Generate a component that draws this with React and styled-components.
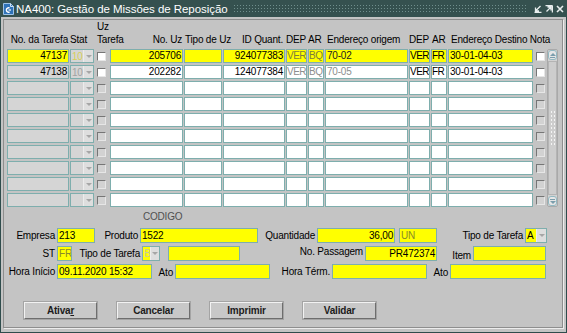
import React from 'react';
import styled, { createGlobalStyle } from 'styled-components';

const YELLOW = '#ffff00';
const COLS = '62px 24px 14px 73px 38px 62px 21px 16px 83px 21px 16px 85px 12px 11px';

const GlobalStyle = createGlobalStyle`
  html, body { margin: 0; padding: 0; background: #c4c4c4; }
  body {
    font-family: "Liberation Sans", Arial, sans-serif;
    font-size: 9.5px;
    letter-spacing: -0.2px;
    color: #000;
  }
`;

const Window = styled.div`
  width: 567px;
  height: 333px;
  display: flex;
  flex-direction: column;
`;

const TitleBar = styled.div`
  height: 17px;
  flex: none;
  display: flex;
  align-items: center;
  padding: 0 3px 0 3px;
  background: #35514f;
  color: #fff;
`;

const TitleText = styled.span`
  margin-left: 2px;
  font-size: 11.5px;
  letter-spacing: -0.05px;
  white-space: nowrap;
`;

const Dots = styled.div`
  flex: 1;
  height: 10px;
  margin: 0 8px 0 5px;
  background-image: radial-gradient(circle, #6f8e8c 0.8px, transparent 1px);
  background-size: 3px 3px;
`;

const TitleButtons = styled.div`
  display: flex;
  gap: 3px;
  align-items: center;
`;

const Frame = styled.div`
  flex: 1;
  display: flex;
  background: #c4c4c4;
  border: 1px solid #2f4c4c;
  border-top: none;
  padding: 2px 3px 4px 2px;
`;

const Panel = styled.div`
  flex: 1;
  display: flex;
  flex-direction: column;
  border: 1px solid #8e8e8e;
  box-shadow: 1px 1px 0 #ececec;
  padding: 0 4px 0 3px;
`;

const HeadGrid = styled.div`
  display: grid;
  grid-template-columns: ${COLS};
  column-gap: 1px;
  height: 28px;
  margin-bottom: 1px;
`;

const HeadCell = styled.div`
  display: flex;
  align-items: flex-end;
  justify-content: ${p => p.$align || 'flex-start'};
  padding: 0 ${p => p.$pr || 0}px 2px ${p => p.$pl || 0}px;
  line-height: 13px;
  font-size: 10px;
  white-space: nowrap;
`;

const BodyGrid = styled.div`
  display: grid;
  grid-template-columns: ${COLS};
  grid-auto-rows: 14px;
  column-gap: 1px;
  row-gap: 2px;
`;

const Field = styled.div`
  box-sizing: border-box;
  width: ${p => (p.$w ? `${p.$w}px` : 'auto')};
  flex: none;
  border: 1px solid #7eaead;
  background: ${p => p.$bg || '#fff'};
  color: ${p => p.$color || '#000'};
  text-align: ${p => p.$align || 'left'};
  padding: 0 ${p => (p.$tight ? 0 : 1)}px;
  font-size: 10px;
  letter-spacing: ${p => (p.$tight ? '-0.5px' : '-0.2px')};
  line-height: 12px;
  overflow: hidden;
  white-space: nowrap;
`;

const Combo = styled.div`
  box-sizing: border-box;
  width: ${p => (p.$w ? `${p.$w}px` : 'auto')};
  flex: none;
  display: flex;
  border: 1px solid #7eaead;
  background: ${p => p.$bg};
`;

const ComboValue = styled.div`
  flex: 1;
  padding-left: 1px;
  font-size: 10px;
  color: ${p => p.$color || '#000'};
  display: flex;
  align-items: center;
`;

const ComboArrow = styled.div`
  width: 9px;
  background: #dedede;
  border-left: 1px solid #ececec;
  display: flex;
  align-items: center;
  justify-content: center;
  &::after {
    content: '';
    border-left: 3px solid transparent;
    border-right: 3px solid transparent;
    border-top: 3px solid #a6a6a6;
  }
`;

const CheckCell = styled.div`
  display: flex;
  align-items: center;
  padding-left: 2px;
`;

const Check = styled.div`
  box-sizing: border-box;
  width: 9px;
  height: 9px;
  border: 1px solid;
  border-color: #767676 #e6e6e6 #e6e6e6 #767676;
  background: ${p => (p.$on ? '#fff' : '#d2d2d2')};
`;

const Scroll = styled.div`
  grid-column: 14;
  grid-row: 1 / span 10;
  display: flex;
  flex-direction: column;
  box-sizing: border-box;
  border: 1px solid #a9a9a9;
  border-radius: 2px;
  background: #d2d2d2;
`;

const ScrollBtn = styled.div`
  height: 10px;
  flex: none;
  box-sizing: border-box;
  border: 1px solid #92b9c2;
  border-radius: 3px;
  background: #e6e6e6;
  display: flex;
  flex-direction: ${p => (p.$down ? 'column-reverse' : 'column')};
  align-items: center;
  justify-content: center;
  gap: 1px;
  &::before {
    content: '';
    border-left: 3px solid transparent;
    border-right: 3px solid transparent;
    ${p => (p.$down ? 'border-top' : 'border-bottom')}: 3px solid #7b9eac;
  }
  &::after {
    content: '';
    width: 5px;
    height: 1px;
    background: #7b9eac;
  }
`;

const Track = styled.div`
  flex: 1;
  margin: 1px 0;
  border: 1px solid #b4b4b4;
  background: #cdcdcd;
  display: flex;
  align-items: center;
  justify-content: center;
`;

const Grip = styled.div`
  width: 6px;
  height: 36px;
  background-image: radial-gradient(circle, #f4f4f4 0.9px, transparent 1.1px);
  background-size: 3px 4px;
`;

const Caption = styled.div`
  margin: 4px 0 5px 136px;
  height: 12px;
  line-height: 12px;
  font-size: 10px;
  color: #505050;
`;

const FormRow = styled.div`
  display: flex;
  height: 15px;
  margin-bottom: 3px;
  & > ${Field} { line-height: 13px; }
`;

const Label = styled.div`
  width: ${p => p.$w}px;
  flex: none;
  box-sizing: border-box;
  display: flex;
  align-items: center;
  justify-content: flex-end;
  padding-right: 2px;
  font-size: 10px;
  white-space: nowrap;
  margin-bottom: ${p => p.$lift || 0}px;
  margin-top: ${p => p.$drop || 0}px;
`;

const Spacer = styled.div`
  width: ${p => p.$w}px;
  flex: none;
`;

const ButtonBar = styled.div`
  display: flex;
  gap: 20px;
  margin: 20px 0 0 17px;
`;

const Button = styled.button`
  width: 73px;
  height: 17px;
  box-sizing: border-box;
  padding: 0;
  background: #c8c8c8;
  border: 1px solid;
  border-color: #f2f2f2 #6e6e6e #6e6e6e #f2f2f2;
  box-shadow: 0 0 0 1px #a4a4a4;
  font-family: inherit;
  font-size: 10px;
  letter-spacing: -0.2px;
  font-weight: bold;
  color: #1c1c1c;
  u { text-decoration-thickness: 1px; }
`;

const rows = [
  { state: 'current', tarefa: '47137', stat: '10', uz: '205706', qty: '924077383', dep: 'VER', ar: 'BQ', orig: '70-02', dep2: 'VER', ar2: 'FR', dest: '30-01-04-03' },
  { state: 'filled', tarefa: '47138', stat: '10', uz: '202282', qty: '124077384', dep: 'VER', ar: 'BQ', orig: '70-05', dep2: 'VER', ar2: 'FR', dest: '30-01-04-03' },
  ...Array.from({ length: 8 }, () => ({ state: 'empty' })),
];

function TaskRow({ row }) {
  const cur = row.state === 'current';
  const bg = cur ? YELLOW : '#fff';
  const faded = cur ? '#7d7d3c' : '#8e8e8e';
  return (
    <>
      <Field $bg={cur ? YELLOW : '#d5d5d5'} $align="right">{row.tarefa}</Field>
      <Combo $bg="#d5d5d5">
        <ComboValue $color={cur ? '#d8d058' : '#a2a2a2'}>{row.stat}</ComboValue>
        <ComboArrow />
      </Combo>
      <CheckCell><Check $on={row.state !== 'empty'} /></CheckCell>
      <Field $bg={bg} $align="right">{row.uz}</Field>
      <Field $bg={bg} />
      <Field $bg={bg} $align="right">{row.qty}</Field>
      <Field $bg={bg} $color={faded} $tight>{row.dep}</Field>
      <Field $bg={bg} $color={faded} $tight>{row.ar}</Field>
      <Field $bg={bg} $color={cur ? '#222' : '#8e8e8e'}>{row.orig}</Field>
      <Field $bg={bg} $tight>{row.dep2}</Field>
      <Field $bg={bg} $tight>{row.ar2}</Field>
      <Field $bg={bg}>{row.dest}</Field>
      <CheckCell><Check $on={row.state !== 'empty'} /></CheckCell>
    </>
  );
}

function DocIcon() {
  return (
    <svg width="11" height="12" viewBox="0 0 11 12">
      <path d="M0.5 0.5 H7.5 L10.5 3.5 V11.5 H0.5 Z" fill="#2f73b8" stroke="#9cc3e8" />
      <path d="M7.5 0.5 V3.5 H10.5" fill="none" stroke="#cfe2f4" />
      <path d="M6.5 5 A2.2 2.2 0 1 0 6.5 9" fill="none" stroke="#fff" strokeWidth="1.4" />
      <path d="M5.5 7 H8" stroke="#fff" strokeWidth="1.2" />
    </svg>
  );
}

function WinIcon({ kind }) {
  return (
    <svg width="8" height="8" viewBox="0 0 8 8" fill="none" stroke="#e8eeee" strokeWidth="1.3">
      {kind === 'min' && <path d="M6.5 1 L2 5.5 M1.5 2.5 V6 H5 M0.5 7.5 H7.5" />}
      {kind === 'max' && <path d="M0.5 0.6 H7.4 M1.5 6.5 L6 2 M2.5 2 H6 V5.5 M7.4 0.6 V7.5" />}
      {kind === 'close' && <path d="M1 1 L7 7 M7 1 L1 7" strokeWidth="1.6" />}
    </svg>
  );
}

export default function App() {
  return (
    <>
      <GlobalStyle />
      <Window>
        <TitleBar>
          <DocIcon />
          <TitleText>NA400: Gestão de Missões de Reposição</TitleText>
          <Dots />
          <TitleButtons>
            <WinIcon kind="min" />
            <WinIcon kind="max" />
            <WinIcon kind="close" />
          </TitleButtons>
        </TitleBar>
        <Frame>
          <Panel>
            <HeadGrid>
              <HeadCell $align="flex-end" $pr={1}>No. da Tarefa</HeadCell>
              <HeadCell>Stat</HeadCell>
              <HeadCell $pl={2}>Uz<br />Tarefa</HeadCell>
              <HeadCell $align="flex-end" $pr={1}>No. Uz</HeadCell>
              <HeadCell $pl={1}>Tipo de Uz</HeadCell>
              <HeadCell $align="flex-end" $pr={2}>ID Quant.</HeadCell>
              <HeadCell>DEP</HeadCell>
              <HeadCell>AR</HeadCell>
              <HeadCell $pl={2}>Endereço origem</HeadCell>
              <HeadCell>DEP</HeadCell>
              <HeadCell $pl={1}>AR</HeadCell>
              <HeadCell $pl={3}>Endereço Destino</HeadCell>
              <HeadCell $align="center">Nota</HeadCell>
              <HeadCell />
            </HeadGrid>
            <BodyGrid>
              <Scroll>
                <ScrollBtn />
                <Track><Grip /></Track>
                <ScrollBtn $down />
              </Scroll>
              {rows.map((row, i) => (
                <TaskRow key={i} row={row} />
              ))}
            </BodyGrid>

            <Caption>CODIGO</Caption>
            <FormRow>
              <Label $w={50}>Empresa</Label>
              <Field $w={38} $bg={YELLOW}>213</Field>
              <Label $w={45}>Produto</Label>
              <Field $w={118} $bg={YELLOW}>1522</Field>
              <Label $w={59}>Quantidade</Label>
              <Field $w={78} $bg={YELLOW} $align="right">36,00</Field>
              <Spacer $w={4} />
              <Field $w={38} $bg={YELLOW} $color="#8a8a2a">UN</Field>
              <Label $w={88}>Tipo de Tarefa</Label>
              <Combo $w={22} $bg={YELLOW}>
                <ComboValue>A</ComboValue>
                <ComboArrow />
              </Combo>
            </FormRow>
            <FormRow>
              <Label $w={50}>ST</Label>
              <Field $w={15} $bg={YELLOW} $color="#8a8a2a">FR</Field>
              <Label $w={70}>Tipo de Tarefa</Label>
              <Combo $w={18} $bg={YELLOW}>
                <ComboValue $color="#c8c8a0">B</ComboValue>
                <ComboArrow />
              </Combo>
              <Spacer $w={8} />
              <Field $w={72} $bg={YELLOW} />
              <Label $w={125} $lift={4}>No. Passagem</Label>
              <Field $w={72} $bg={YELLOW} $align="right">PR472374</Field>
              <Label $w={36} $drop={3}>Item</Label>
              <Field $w={73} $bg={YELLOW} />
            </FormRow>
            <FormRow>
              <Label $w={50}>Hora Início</Label>
              <Field $w={95} $bg={YELLOW}>09.11.2020 15:32</Field>
              <Label $w={23} $drop={2}>Ato</Label>
              <Field $w={95} $bg={YELLOW} />
              <Label $w={62}>Hora Térm.</Label>
              <Field $w={95} $bg={YELLOW} />
              <Label $w={23} $drop={2}>Ato</Label>
              <Field $w={96} $bg={YELLOW} />
            </FormRow>

            <ButtonBar>
              <Button>Ativa<u>r</u></Button>
              <Button>Cancelar</Button>
              <Button>Imprimir</Button>
              <Button>Validar</Button>
            </ButtonBar>
          </Panel>
        </Frame>
      </Window>
    </>
  );
}
